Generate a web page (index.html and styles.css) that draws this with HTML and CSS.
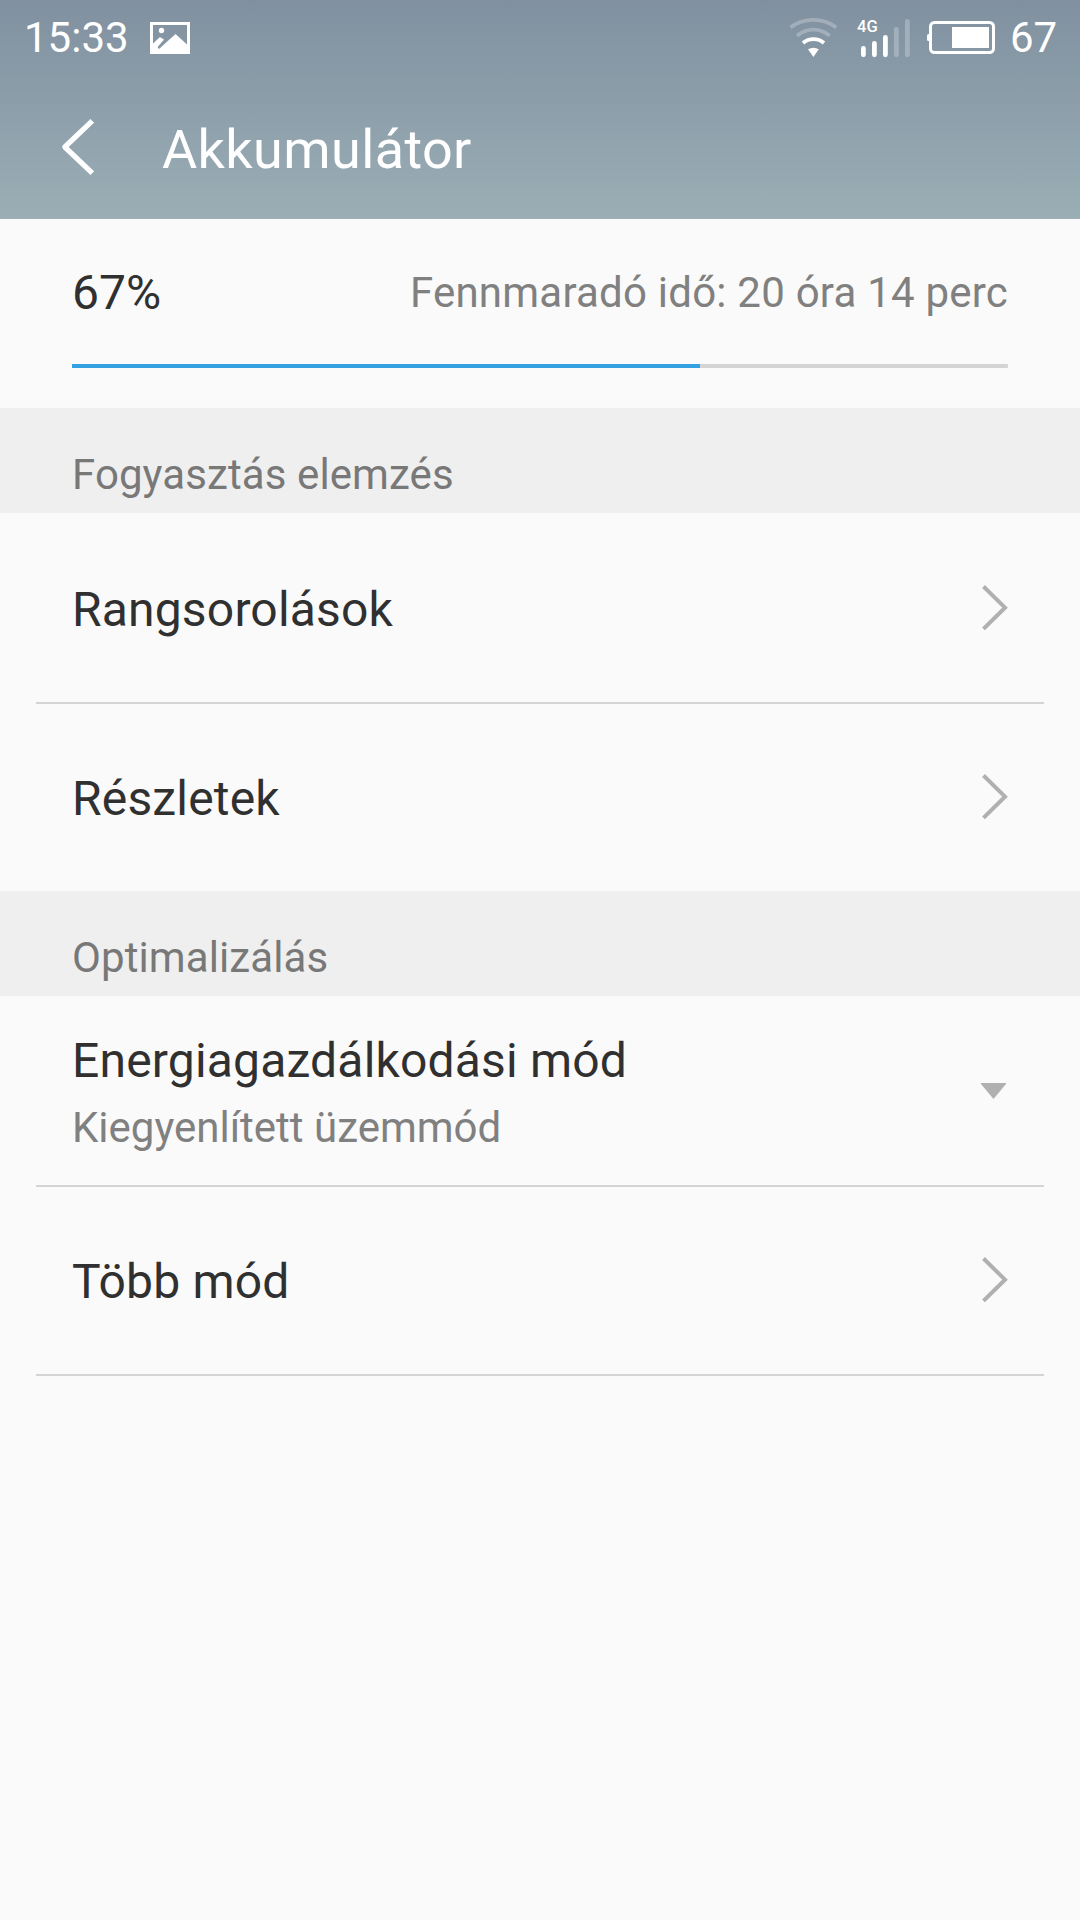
FILE: index.html
```html
<!DOCTYPE html>
<html lang="hu">
<head>
    <meta charset="UTF-8">
    <meta name="viewport" content="width=device-width, initial-scale=1.0">
    <title>Akkumulátor</title>
    <link rel="stylesheet" href="styles.css">
</head>
<body>
    <!-- Header -->
    <header class="header">
        <div class="status-bar">
            <span class="status-text clock">15:33</span>
            <svg class="picture-icon" width="40" height="32" viewBox="0 0 40 32">
                <path fill="#fff" fill-rule="evenodd" d="M0 0H40V32H0ZM3 3V21.5L10 15L13.5 17.8L7.5 25L9 27L25.5 12L37 22.5V3Z"/>
                <path stroke="#fff" stroke-width="2.4" d="M6 24.5L13 17"/>
                <circle cx="11.5" cy="8.5" r="2.7" fill="#fff"/>
            </svg>
            <div class="status-right">
                <svg class="wifi-icon" width="50" height="40" viewBox="788 18 50 40" fill="none" stroke="#fff" stroke-width="3.8">
                    <path opacity="0.25" d="M790.5 27.5A38 38 0 0 1 836.2 27.5"/>
                    <path opacity="0.25" d="M797 35.7A25 25 0 0 1 829.7 35.7"/>
                    <path d="M803 43A16 16 0 0 1 824 43"/>
                    <path fill="#fff" stroke="none" d="M808 49.3Q813.4 46.3 818.8 49.3L813.4 57Z"/>
                </svg>
                <div class="signal">
                    <span class="network">4G</span>
                    <svg width="55" height="40" viewBox="856 18 55 40" fill="none" stroke="#fff" stroke-width="4.8" stroke-linecap="round">
                        <path d="M863.4 48.4V54.8M874.4 43.4V54.8M885.4 37.4V54.8"/>
                        <path opacity="0.25" d="M896.4 29.4V54.8M907.4 21.4V54.8"/>
                    </svg>
                </div>
                <svg class="battery-icon" width="69" height="34" viewBox="927 21 69 34">
                    <rect x="930.5" y="22.5" width="63" height="30" rx="4" fill="none" stroke="#fff" stroke-width="3"/>
                    <rect x="927" y="34" width="4" height="7" rx="1.5" fill="#fff"/>
                    <rect x="952" y="27" width="37" height="21" fill="#fff"/>
                </svg>
                <span class="status-text level">67</span>
            </div>
        </div>
        <div class="title-bar">
            <svg width="34" height="58" viewBox="61 118 34 58" fill="none" stroke="#fff" stroke-width="5.2" stroke-linejoin="round">
                <path d="M92.3 120.8L64.8 147L92.3 173.2"/>
            </svg>
            <h1 class="title">Akkumulátor</h1>
        </div>
    </header>

    <!-- Charge level -->
    <section class="charge">
        <div class="charge-info">
            <span class="percent">67%</span>
            <span class="remaining">Fennmaradó idő: 20 óra 14 perc</span>
        </div>
        <div class="progress">
            <div class="progress-fill" style="width: 67.1%"></div>
        </div>
    </section>

    <!-- Settings -->
    <h2 class="section-title">Fogyasztás elemzés</h2>
    <ul class="list">
        <li class="row">
            <span class="label">Rangsorolások</span>
            <svg class="chevron" width="26" height="46" viewBox="0 0 26 46"><path d="M1.5 1.5L23 22.7L1.5 43.9"/></svg>
        </li>
        <li class="row">
            <span class="label">Részletek</span>
            <svg class="chevron" width="26" height="46" viewBox="0 0 26 46"><path d="M1.5 1.5L23 22.7L1.5 43.9"/></svg>
        </li>
    </ul>

    <h2 class="section-title">Optimalizálás</h2>
    <ul class="list list-last">
        <li class="row">
            <div class="row-text">
                <span class="label">Energiagazdálkodási mód</span>
                <span class="value">Kiegyenlített üzemmód</span>
            </div>
            <svg class="dropdown" width="25" height="16" viewBox="0 0 25 16"><path fill="#b0b0b0" d="M0 0H25V1L12.5 16L0 1Z"/></svg>
        </li>
        <li class="row">
            <span class="label">Több mód</span>
            <svg class="chevron" width="26" height="46" viewBox="0 0 26 46"><path d="M1.5 1.5L23 22.7L1.5 43.9"/></svg>
        </li>
    </ul>
</body>
</html>
```
FILE: styles.css
```css
* {
    margin: 0;
    padding: 0;
    box-sizing: border-box;
}

body {
    background-color: #fafafa;
    color: #303030;
    font-family: Roboto, "Noto Sans", sans-serif;
    min-height: 100vh;
}

svg {
    display: block;
    flex-shrink: 0;
}

.header {
    height: 219px;
    background: linear-gradient(#8090a0, #9baeb5);
    color: #fff;
}

.status-bar {
    display: flex;
    align-items: center;
    height: 76px;
    padding: 0 23px 0 24px;
}

.status-text {
    padding-bottom: 1px;
    font-size: 42px;
    line-height: 50px;
}

.clock {
    width: 105px;
}

.picture-icon {
    margin-left: 21px;
}

.status-right {
    display: flex;
    align-items: center;
    margin-left: auto;
}

.signal {
    position: relative;
    margin: 0 16px 0 18px;
}

.network {
    position: absolute;
    left: 1px;
    top: -1px;
    font-size: 16.5px;
    font-weight: 500;
    line-height: 20px;
}

.level {
    width: 47px;
    margin-left: 14px;
}

.title-bar {
    display: flex;
    align-items: center;
    height: 142px;
    padding: 0 61px;
}

.title {
    margin-left: 67px;
    padding-top: 5px;
    font-size: 54px;
    font-weight: 400;
    letter-spacing: 0.38px;
    line-height: 64px;
}

.charge {
    height: 189px;
    padding: 43px 72px 0;
}

.charge-info {
    display: flex;
    justify-content: space-between;
    height: 62px;
}

.percent {
    font-size: 48px;
    line-height: 62px;
}

.remaining {
    color: #808080;
    font-size: 42px;
    letter-spacing: 0.22px;
    line-height: 61px;
}

.progress {
    height: 4px;
    margin-top: 40px;
    border-radius: 1px;
    background-color: #d4d4d4;
}

.progress-fill {
    height: 4px;
    background-color: #32a0e1;
}

.section-title {
    height: 105px;
    padding: 42px 72px 0;
    background-color: #efefef;
    color: #787878;
    font-size: 42px;
    font-weight: 400;
    letter-spacing: 0.1px;
    line-height: 50px;
}

.list {
    margin: 0 36px;
    list-style: none;
}

.row {
    display: flex;
    align-items: center;
    justify-content: space-between;
    height: 189px;
    padding: 0 36px;
}

.row + .row {
    box-shadow: inset 0 2px #d4d4d4;
}

.list-last {
    border-bottom: 2px solid #d4d4d4;
}

.row-text {
    display: flex;
    flex-direction: column;
    padding-top: 10px;
}

.label {
    padding-top: 4px;
    font-size: 48px;
    letter-spacing: 0.18px;
    line-height: 60px;
}

.value {
    color: #808080;
    font-size: 42px;
    line-height: 74px;
}

.chevron {
    fill: none;
    stroke: #b0b0b0;
    stroke-width: 4;
}

.dropdown {
    margin-right: 2px;
}
```
